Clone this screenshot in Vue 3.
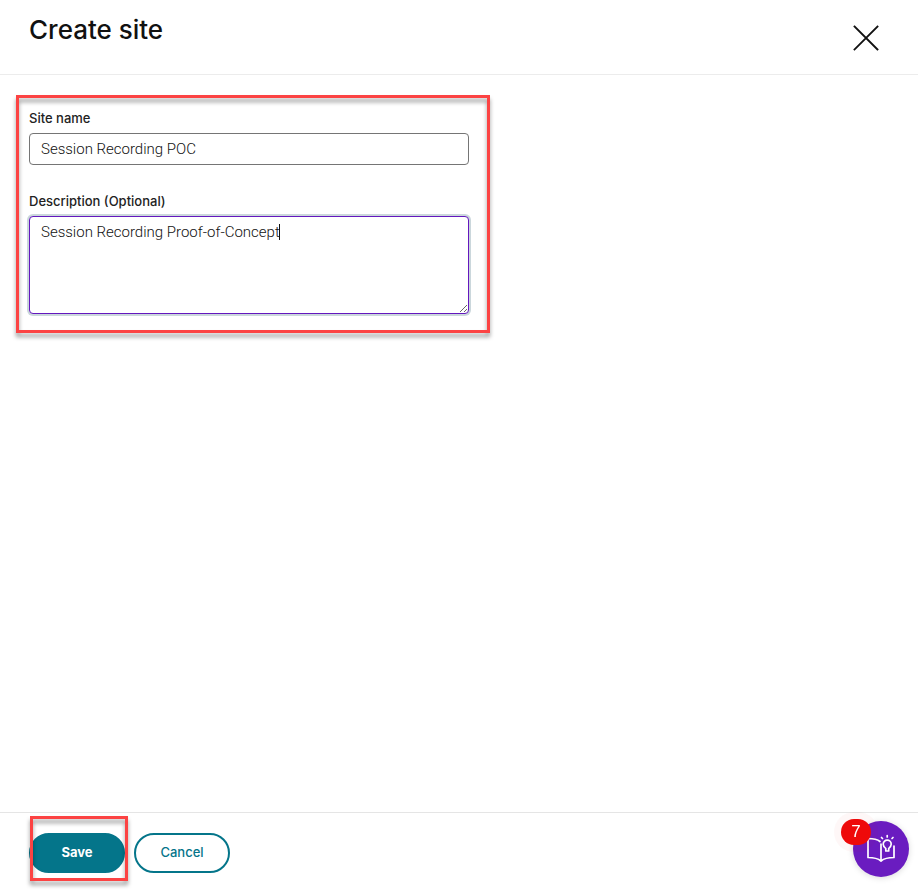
<script setup>
import { ref } from 'vue'

const siteName = ref('Session Recording POC')
const description = ref('Session Recording Proof-of-Concept')
const notifications = ref(7)
</script>

<template>
  <div class="panel">
    <header class="panel-header">
      <h1>Create site</h1>
      <button class="close" type="button" aria-label="Close">
        <svg viewBox="0 0 26 26" width="26" height="26" aria-hidden="true">
          <path d="M1.500 1.500 24.500 24.500M24.500 1.500 1.500 24.500" fill="none" stroke="#111" stroke-width="1.8" stroke-linecap="square" />
        </svg>
      </button>
    </header>

    <form id="site-form" class="panel-body" @submit.prevent>
      <div class="fields">
        <div class="field">
          <label for="site-name">Site name</label>
          <input id="site-name" v-model="siteName" type="text" />
        </div>
        <div class="field">
          <label for="site-description">Description (Optional)</label>
          <div class="area">
            <textarea id="site-description" v-model="description"></textarea>
            <span class="caret"></span>
          </div>
        </div>
        <span class="callout callout-fields"></span>
      </div>
    </form>

    <footer class="panel-footer">
      <div class="save-wrap">
        <button class="btn primary" type="submit" form="site-form">Save</button>
        <span class="callout callout-save"></span>
      </div>
      <button class="btn" type="button">Cancel</button>
    </footer>

    <button class="help" type="button" aria-label="Help resources">
      <svg viewBox="0 0 30 30" width="30" height="30" aria-hidden="true">
        <g fill="none" stroke="#fff" stroke-width="1.7" stroke-linecap="round" stroke-linejoin="round">
          <path d="M15 27V10M14 7.500C11 5 7 4.500 2 4.500V23.500C8 23.500 12 24.500 15 27C18 24.500 22 23.500 28 23.500V12" />
          <path d="M19.800 14.500C18.200 13 17.200 12 17.200 10.200a4 4 0 0 1 8 0C25.200 12 24.200 13 22.700 14.500V17H19.800Z" />
          <path d="M21.200 1.500V3M15.500 3.500 16.500 4.500M27 3.500 26 4.500" />
        </g>
      </svg>
      <span class="badge">{{ notifications }}</span>
    </button>
  </div>
</template>

<style>
body {
  margin: 0;
  background: #fff;
}
</style>

<style scoped>
.panel {
  display: flex;
  flex-direction: column;
  min-height: 100vh;
  color: #222;
  font-family: Inter, "Liberation Sans", sans-serif;
}

.panel *,
.panel {
  box-sizing: border-box;
}

button,
input,
textarea {
  margin: 0;
  font-family: inherit;
}

.panel-header {
  display: flex;
  justify-content: space-between;
  align-items: flex-start;
  height: 75px;
  padding: 14px 39px 0 29px;
  border-bottom: 1px solid #ececec;
}

h1 {
  margin: 0;
  font-size: 26px;
  line-height: 32px;
  font-weight: 500;
  color: #111;
}

.close {
  display: flex;
  margin-top: 11px;
  padding: 0;
  border: 0;
  background: none;
}

.panel-body {
  flex: 1;
  padding: 35px 29px;
}

.fields {
  position: relative;
  display: flex;
  flex-direction: column;
  gap: 28px;
  max-width: 440px;
}

.field {
  display: flex;
  flex-direction: column;
  gap: 7px;
}

label {
  font-size: 13px;
  line-height: 16px;
  font-weight: 500;
}

input,
.area textarea {
  display: block;
  width: 100%;
  border: 1px solid #757575;
  border-radius: 4px;
  background: #fff;
  padding: 0 11px;
  font-family: Roboto, "Liberation Sans", sans-serif;
  font-size: 15px;
  line-height: 20px;
  font-weight: 300;
  color: #111;
  outline: 0;
}

input {
  height: 32px;
}

.area {
  position: relative;
}

.area textarea {
  height: 98px;
  padding: 5px 11px;
  border-color: #6418be;
  box-shadow: 0 0 0 2px #cbd7dc;
  resize: both;
}

.caret {
  position: absolute;
  top: 8px;
  left: 250px;
  width: 1px;
  height: 16px;
  background: #111;
}

.callout {
  position: absolute;
  border: 3px solid #fc4343;
  filter: drop-shadow(0 4px 2px rgba(0, 0, 0, 0.4));
  pointer-events: none;
}

.callout-fields {
  inset: -15px -21px -19px -13px;
}

.callout-save {
  inset: -17px -3px -8px 1px;
}

.panel-footer {
  display: flex;
  gap: 9px;
  padding: 20px 29px 18px;
  border-top: 1px solid #e5e5e5;
}

.save-wrap {
  position: relative;
}

.btn {
  width: 96px;
  height: 40px;
  padding: 0 0 2px;
  border: 2px solid #04758a;
  border-radius: 20px;
  background: #fff;
  color: #04758a;
  font-size: 13px;
  line-height: 16px;
  font-weight: 500;
}

.btn.primary {
  display: block;
  background: #04758a;
  color: #fff;
  font-weight: 700;
}

.help {
  position: fixed;
  right: 9px;
  bottom: 14px;
  display: flex;
  align-items: center;
  justify-content: center;
  width: 56px;
  height: 56px;
  padding: 0;
  border: 0;
  border-radius: 50%;
  background: #6a1cc0;
  box-shadow: 0 1px 6px rgba(0, 0, 0, 0.15);
}

.badge {
  position: absolute;
  top: -2px;
  left: -12px;
  width: 30px;
  height: 26px;
  border-radius: 13px;
  background: #ee0a0a;
  box-shadow: 0 0 0 7px rgba(238, 10, 10, 0.03);
  color: #fff;
  font-family: "Liberation Sans", sans-serif;
  font-size: 17px;
  line-height: 26px;
  text-align: center;
}
</style>
